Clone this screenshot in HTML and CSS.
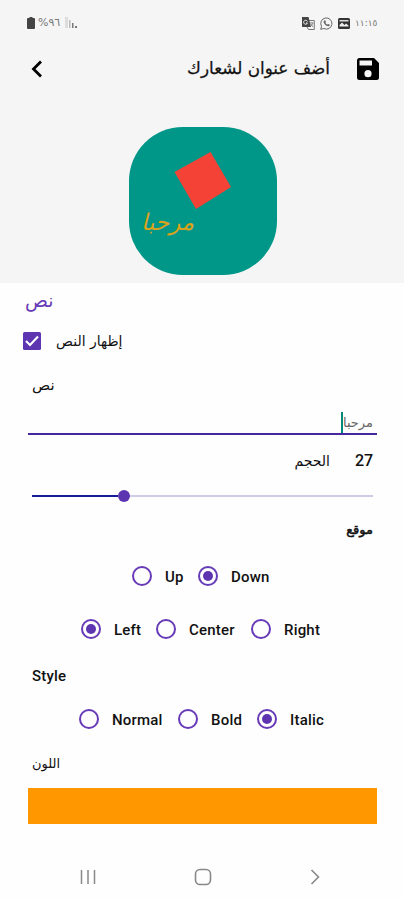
FILE: index.html
```html
<!DOCTYPE html>
<html lang="ar">
<head>
<meta charset="utf-8">
<title>أضف عنوان لشعارك</title>
<link rel="stylesheet" href="styles.css">
</head>
<body>
<header class="top">
  <div class="status">
    <svg class="battery" width="8" height="12" viewBox="0 0 8 12"><path d="M2.500 0h3v1H7q1 0 1 1v9q0 1-1 1H1q-1 0-1-1V2q0-1 1-1h1.500z" fill="#444"/></svg>
    <span class="percent" dir="ltr">%٩٦</span>
    <svg class="signal" width="13" height="12" viewBox="0 0 13 12"><path d="M0 0h3v11H0z" fill="#ddd"/><path d="M4 3h1.500v8H4z" fill="#bbb"/><path d="M7 6h1.500v5H7zM10 9h2v2h-2z" fill="#777"/></svg>
    <span class="spacer"></span>
    <svg class="s-icon" width="13" height="13" viewBox="0 0 13 13"><path d="M5 3.500h7.300v9H6.500L5 10" fill="none" stroke="#777"/><path d="M0 0h6.500l2.500 10H0z" fill="#444"/><path d="M5.500 4.500A2 2 0 1 0 5.500 6H4" fill="none" stroke="#eee"/><path d="M8 6h3.500M10 5v1M11 6q-.5 2-2.500 3M9 7l2 3" fill="none" stroke="#777" stroke-width=".8"/></svg>
    <svg class="s-icon" width="13" height="13" viewBox="0 0 13 13"><path d="M.7 12.300l.8-3A5.600 5.600 0 1 1 3.800 11.500z" fill="none" stroke="#666"/><path d="M4.200 3.400l1-.2.8 1.700-.6.8q.7 1.300 2 1.900l.8-.7 1.600.8q0 1.500-1.600 1.600Q4.400 8.600 3.600 5q0-1 .6-1.600z" fill="#666"/></svg>
    <svg class="s-icon" width="12" height="11" viewBox="0 0 12 11"><rect width="12" height="11" rx="1.500" fill="#333"/><path d="M1.500 2h9v1.500h-9z" fill="#ddd"/><path d="M1.500 8.500V7L4 4.500 6.500 7 8 5.500l2.500 2v1z" fill="#eee"/></svg>
    <span class="clock" dir="ltr">١١:١٥</span>
  </div>
  <div class="appbar">
    <svg width="12" height="18" viewBox="0 0 12 18"><path d="M10 1.500L2.500 9l7.500 7.500" fill="none" stroke="#000" stroke-width="2.800"/></svg>
    <h1 class="title" dir="rtl">أضف عنوان لشعارك</h1>
    <svg width="22" height="22" viewBox="0 0 22 22"><path d="M2.500 0H17l5 5v14.500q0 2.500-2.500 2.500h-17Q0 22 0 19.500v-17Q0 0 2.500 0z" fill="#000"/><path d="M2.500 2.500h12.500v5H2.500z" fill="#f5f5f5"/><circle cx="11" cy="15.700" r="3.600" fill="#f5f5f5"/></svg>
  </div>
  <div class="logo">
    <svg class="square" width="148" height="148" viewBox="0 0 148 148"><path d="M81.500 25l20.500 35-35 22-21.500-37z" fill="#f44336"/></svg>
    <span class="logo-text" dir="rtl">مرحبا</span>
  </div>
</header>
<main class="form">
  <h2 class="section" dir="rtl">نص</h2>
  <div class="check-row">
    <svg width="18" height="18" viewBox="0 0 18 18"><rect width="18" height="18" rx="1.500" fill="#5e35b1"/><path d="M3 9l4 4 8-8.500" fill="none" stroke="#fff" stroke-width="2.100"/></svg>
    <span class="ar" dir="rtl">إظهار النص</span>
  </div>
  <div class="label label-text"><span class="ar" dir="rtl">نص</span></div>
  <div class="input"><span class="caret"></span><span class="value" dir="rtl">مرحبا</span></div>
  <div class="size-row"><span class="ar" dir="rtl">الحجم</span><b class="number">27</b></div>
  <div class="slider"><span class="filled"></span><span class="thumb"></span><span class="rest"></span></div>
  <div class="label label-position"><span class="ar heavy" dir="rtl">موقع</span></div>
  <div class="radios row-vertical">
    <span class="option w-up"><i class="radio"></i><span class="name">Up</span></span>
    <span class="option"><i class="radio on"></i><span class="name">Down</span></span>
  </div>
  <div class="radios row-horizontal">
    <span class="option w-left"><i class="radio on"></i><span class="name">Left</span></span>
    <span class="option w-center"><i class="radio"></i><span class="name">Center</span></span>
    <span class="option"><i class="radio"></i><span class="name">Right</span></span>
  </div>
  <div class="label label-style"><span class="name">Style</span></div>
  <div class="radios row-style">
    <span class="option w-normal"><i class="radio"></i><span class="name">Normal</span></span>
    <span class="option w-bold"><i class="radio"></i><span class="name">Bold</span></span>
    <span class="option"><i class="radio on"></i><span class="name">Italic</span></span>
  </div>
  <div class="label label-color"><span class="ar small" dir="rtl">اللون</span></div>
  <div class="swatch"></div>
</main>
<nav class="nav">
  <svg width="16" height="16" viewBox="0 0 16 16"><path d="M1.500 1v14M8 1v14M14.500 1v14" stroke="#888" stroke-width="1.500"/></svg>
  <svg width="18" height="18" viewBox="0 0 18 18"><rect x="1.500" y="1.500" width="15" height="15" rx="4.500" fill="none" stroke="#888" stroke-width="1.600"/></svg>
  <svg width="10" height="16" viewBox="0 0 10 16"><path d="M1.500 1l7 7-7 7" fill="none" stroke="#888" stroke-width="1.600"/></svg>
</nav>
</body>
</html>
```
FILE: styles.css
```css
* { box-sizing: border-box; }
body {
  margin: 0;
  width: 404px;
  height: 900px;
  overflow: hidden;
  background: #fefefe;
  color: #111;
  font: 500 14.5px/20px Roboto, "DejaVu Sans", sans-serif;
}
svg { display: block; flex: none; }
.top { height: 283px; background: #f5f5f5; }
.status {
  display: flex;
  align-items: center;
  height: 46px;
  padding: 0 26px 0 27px;
  color: #777;
  font: 10px/14px "DejaVu Sans", sans-serif;
}
.percent { margin-left: 3px; width: 25px; font-size: 11px; white-space: nowrap; }
.signal { margin-left: 2px; }
.spacer { flex: 1; }
.s-icon { margin-right: 5px; }
.clock { width: 23px; font-size: 9px; white-space: nowrap; }
.appbar {
  display: flex;
  align-items: center;
  height: 46px;
  padding: 0 25px 0 31px;
}
.title {
  flex: 1;
  margin: 0 27px 2px 0;
  color: #111;
  font: 400 16.8px/30px "DejaVu Sans", sans-serif;
  -webkit-text-stroke: 0.25px #111;
}
.logo {
  position: relative;
  width: 148px;
  height: 148px;
  margin: 35px 0 0 129px;
  border-radius: 54px;
  background: #009688;
}
.logo-text {
  position: absolute;
  left: 12px;
  top: 78px;
  color: #d9a31c;
  font: italic 23px/34px "DejaVu Sans", sans-serif;
}
.ar { font: 400 14px/20px "DejaVu Sans", sans-serif; white-space: nowrap; }
.small { font-size: 13px; }
.heavy { font-size: 13px; -webkit-text-stroke: 0.5px #111; }
.section {
  height: 36px;
  margin: 0;
  padding-left: 25px;
  color: #673ab7;
  font: 400 19px/35px "DejaVu Sans", sans-serif;
  text-align: left;
}
.check-row {
  display: flex;
  align-items: center;
  gap: 15px;
  height: 44px;
  padding-left: 23px;
}
.label { display: flex; align-items: center; padding: 0 31px 0 32px; }
.label-text { height: 44px; }
.label-text .ar { font-size: 15px; }
.input {
  display: flex;
  align-items: center;
  justify-content: flex-end;
  height: 28px;
  margin: 0 27px 0 28px;
  padding-right: 4px;
  border-bottom: 2px solid #4527a0;
}
.caret { width: 2px; height: 21px; background: #00897b; align-self: flex-end; }
.value { padding-top: 5px; color: #666; font: 13px/20px "DejaVu Sans", sans-serif; }
.size-row {
  display: flex;
  align-items: center;
  justify-content: flex-end;
  height: 52px;
  padding-right: 31px;
}
.number { width: 18px; margin-left: 25px; font-size: 16px; font-weight: 500; }
.slider { display: flex; align-items: center; height: 17px; padding: 0 31px 0 32px; }
.filled { width: 86px; height: 2px; background: #1a1a9c; }
.thumb { width: 12px; height: 12px; border-radius: 50%; background: #5e35b1; }
.rest { flex: 1; height: 2px; background: #d1cbe9; }
.label-position { height: 52px; justify-content: flex-end; }
.radios { display: flex; align-items: center; }
.option { display: flex; align-items: center; flex: none; }
.name { padding-top: 2px; letter-spacing: 0.2px; font-size: 15px; }
.radio {
  display: flex;
  align-items: center;
  justify-content: center;
  width: 20px;
  height: 20px;
  margin-right: 13px;
  border: 2px solid #673ab7;
  border-radius: 50%;
}
.on::after { content: ""; width: 10px; height: 10px; border-radius: 50%; background: #5e35b1; }
.row-vertical { height: 40px; padding-left: 132px; }
.row-horizontal { height: 66px; padding-left: 81px; }
.row-style { height: 62px; padding-left: 79px; }
.w-up { width: 66px; }
.w-left { width: 75px; }
.w-center { width: 95px; }
.w-normal { width: 99px; }
.w-bold { width: 79px; }
.label-style { height: 26px; }
.label-color { height: 38px; padding-bottom: 11px; }
.swatch { height: 36px; margin: 0 27px 0 28px; background: #ff9800; }
.nav {
  display: flex;
  align-items: center;
  justify-content: space-between;
  height: 105px;
  padding: 0 84px 0 80px;
}
```
